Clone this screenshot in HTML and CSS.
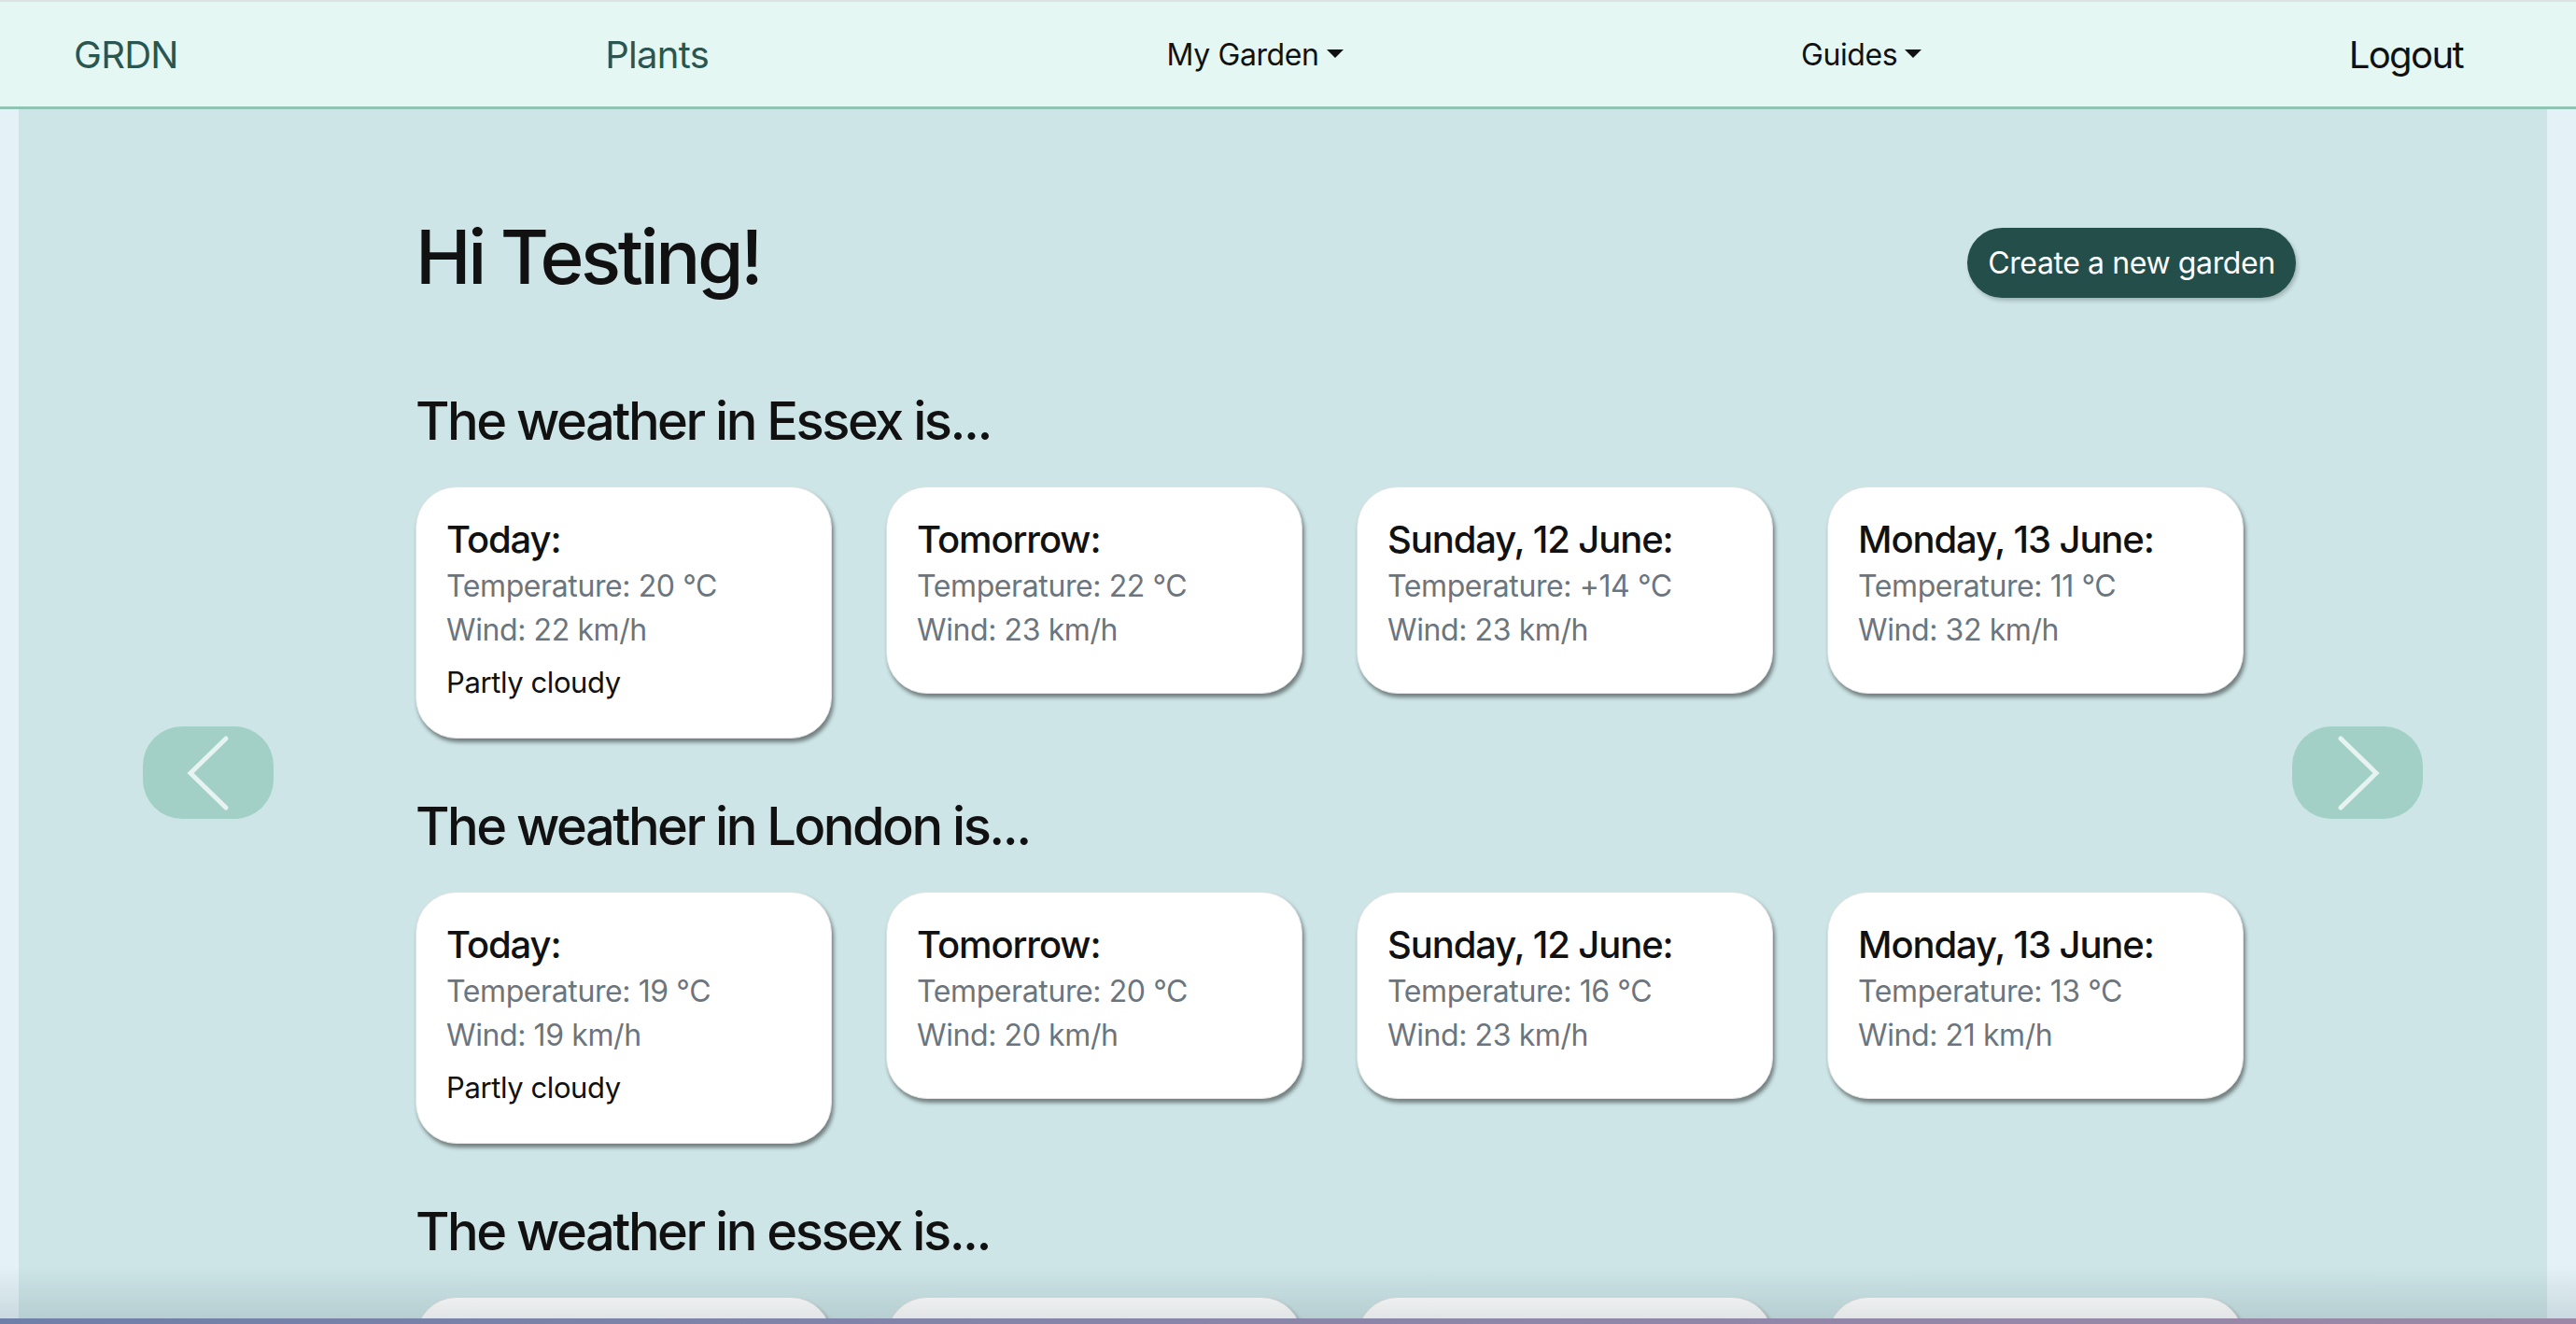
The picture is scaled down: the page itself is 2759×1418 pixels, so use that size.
FILE: index.html
```html
<!DOCTYPE html>
<html lang="en">
<head>
<meta charset="utf-8">
<title>GRDN</title>
<link rel="stylesheet" href="styles.css">
</head>
<body>
<div class="topline"></div>
<nav class="navbar">
  <a class="brand">GRDN</a>
  <a class="nav-link plants">Plants</a>
  <a class="nav-link dropdown">My Garden</a>
  <a class="nav-link dropdown">Guides</a>
  <a class="nav-link logout">Logout</a>
</nav>
<main class="main">
  <div class="hero">
    <h1 class="greeting">Hi Testing!</h1>
    <button class="btn-create">Create a new garden</button>
  </div>

  <section class="weather">
    <h3 class="weather-title">The weather in Essex is...</h3>
    <div class="cards">
      <div class="card">
        <h5 class="card-title">Today:</h5>
        <p class="muted">Temperature: 20 °C</p>
        <p class="muted last">Wind: 22 km/h</p>
        <p class="desc">Partly cloudy</p>
      </div>
      <div class="card">
        <h5 class="card-title">Tomorrow:</h5>
        <p class="muted">Temperature: 22 °C</p>
        <p class="muted last">Wind: 23 km/h</p>
      </div>
      <div class="card">
        <h5 class="card-title">Sunday, 12 June:</h5>
        <p class="muted">Temperature: +14 °C</p>
        <p class="muted last">Wind: 23 km/h</p>
      </div>
      <div class="card">
        <h5 class="card-title">Monday, 13 June:</h5>
        <p class="muted">Temperature: 11 °C</p>
        <p class="muted last">Wind: 32 km/h</p>
      </div>
    </div>
  </section>

  <section class="weather">
    <h3 class="weather-title">The weather in London is...</h3>
    <div class="cards">
      <div class="card">
        <h5 class="card-title">Today:</h5>
        <p class="muted">Temperature: 19 °C</p>
        <p class="muted last">Wind: 19 km/h</p>
        <p class="desc">Partly cloudy</p>
      </div>
      <div class="card">
        <h5 class="card-title">Tomorrow:</h5>
        <p class="muted">Temperature: 20 °C</p>
        <p class="muted last">Wind: 20 km/h</p>
      </div>
      <div class="card">
        <h5 class="card-title">Sunday, 12 June:</h5>
        <p class="muted">Temperature: 16 °C</p>
        <p class="muted last">Wind: 23 km/h</p>
      </div>
      <div class="card">
        <h5 class="card-title">Monday, 13 June:</h5>
        <p class="muted">Temperature: 13 °C</p>
        <p class="muted last">Wind: 21 km/h</p>
      </div>
    </div>
  </section>

  <section class="weather">
    <h3 class="weather-title">The weather in essex is...</h3>
    <div class="cards">
      <div class="card card-empty"></div>
      <div class="card card-empty"></div>
      <div class="card card-empty"></div>
      <div class="card card-empty"></div>
    </div>
  </section>

  <button class="arrow arrow-prev" aria-label="Previous">
    <svg width="140" height="99" viewBox="0 0 140 99"><polyline points="89,13 51,50 89,87" fill="none" stroke="#e6f3f1" stroke-width="5" stroke-linecap="round" stroke-linejoin="miter"/></svg>
  </button>
  <button class="arrow arrow-next" aria-label="Next">
    <svg width="140" height="99" viewBox="0 0 140 99"><polyline points="52,13 90,50 52,87" fill="none" stroke="#e6f3f1" stroke-width="5" stroke-linecap="round" stroke-linejoin="miter"/></svg>
  </button>
</main>
<div class="bottom-shade"></div>
<div class="dock-bar"></div>
</body>
</html>
```
FILE: styles.css
```css
* { box-sizing: border-box; }

html, body {
  margin: 0;
  padding: 0;
}

body {
  background: #e4f2f7;
  font-family: Inter, "Noto Sans", "Liberation Sans", sans-serif;
  color: #151515;
  height: 1418px;
  overflow: hidden;
}

.topline {
  height: 2px;
  background: #dde1e1;
}

.navbar {
  height: 115px;
  background: #e4f7f3;
  border-bottom: 3px solid #8fc4b2;
  display: flex;
  align-items: center;
  justify-content: space-between;
  padding: 2px 121px 0 79px;
}

.brand {
  font-size: 40px;
  line-height: 48px;
  color: #2a5651;
  letter-spacing: -0.7px;
}

.nav-link {
  font-size: 32px;
  line-height: 38px;
  color: #111;
  padding: 0 33px;
  letter-spacing: -0.4px;
}

.nav-link.plants {
  font-size: 40px;
  line-height: 48px;
  color: #2a5651;
  letter-spacing: -0.7px;
}

.nav-link.logout {
  font-size: 40px;
  line-height: 48px;
  padding: 0;
  color: #111;
  letter-spacing: -1.6px;
}

.dropdown::after {
  content: "";
  display: inline-block;
  margin-left: 8px;
  vertical-align: 8px;
  border-top: 9px solid #111;
  border-left: 9px solid transparent;
  border-right: 9px solid transparent;
}

.main {
  position: relative;
  margin: 0 31px 0 20px;
  background: #cde5e7;
  padding: 110px 0 0 425px;
  height: 1301px;
  overflow: hidden;
}

.hero {
  width: 2014px;
  display: flex;
  justify-content: space-between;
  align-items: center;
  margin-bottom: 95px;
}

.greeting {
  margin: 0;
  font-size: 80px;
  line-height: 96px;
  font-weight: 500;
  letter-spacing: -3.4px;
  color: #111;
}

.btn-create {
  margin-top: 13px;
  width: 352px;
  height: 75px;
  border: none;
  border-radius: 38px;
  background: #234e4a;
  color: #fff;
  font-family: inherit;
  font-size: 32px;
  letter-spacing: -0.4px;
  box-shadow: 2px 3px 4px rgba(0, 0, 0, 0.22);
}

.weather {
  margin-bottom: 61px;
}

.weather-title {
  margin: 0 0 36px;
  font-size: 56px;
  line-height: 67px;
  font-weight: 500;
  letter-spacing: -2.5px;
  color: #111;
}

.cards {
  display: flex;
  align-items: flex-start;
  gap: 58px;
}

.card {
  width: 446px;
  background: #fff;
  border: 1px solid #e2e2e2;
  border-radius: 44px;
  padding: 32px 32px 35px;
  box-shadow: 2px 4px 4px rgba(0, 0, 0, 0.45);
}

.card-empty {
  height: 222px;
}

.card-title {
  margin: 0 0 2px;
  font-size: 40px;
  line-height: 48px;
  font-weight: 500;
  letter-spacing: -1.1px;
  color: #111;
}

.muted {
  margin: 0;
  font-size: 32px;
  line-height: 47px;
  color: #6c757d;
  letter-spacing: -0.4px;
}

.muted.last {
  margin-bottom: 9px;
}

.desc {
  margin: 0;
  font-size: 31px;
  line-height: 48px;
  color: #111;
  letter-spacing: -0.4px;
}

.arrow {
  position: absolute;
  top: 661px;
  width: 140px;
  height: 99px;
  padding: 0;
  border: none;
  border-radius: 42px;
  background: #a2d0c6;
}

.arrow svg { display: block; }

.arrow-prev { left: 133px; }
.arrow-next { right: 133px; }

.bottom-shade {
  position: fixed;
  left: 0;
  right: 0;
  bottom: 6px;
  height: 56px;
  background: linear-gradient(to bottom, rgba(60, 80, 90, 0) 0%, rgba(60, 80, 90, 0.15) 100%);
  pointer-events: none;
}

.dock-bar {
  position: fixed;
  left: 0;
  right: 0;
  bottom: 0;
  height: 6px;
  background: linear-gradient(to right, #6f80a8, #8a86a8 50%, #9c88a6);
}
```
